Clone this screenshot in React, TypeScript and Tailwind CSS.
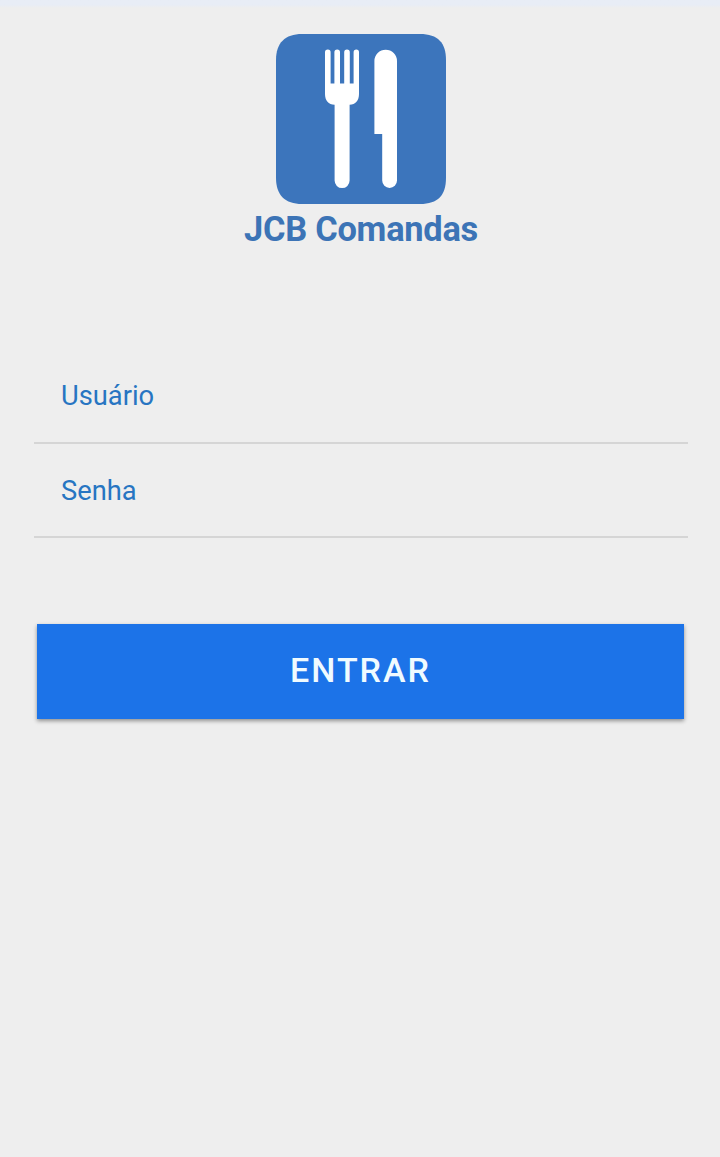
import { useState } from 'react';

interface LoginFieldProps {
  label: string;
  type: 'text' | 'password';
  value: string;
  onChange: (value: string) => void;
}

function Logo() {
  return (
    <svg viewBox="0 0 170 170" className="h-[170px] w-[170px]" aria-hidden="true">
      <path
        d="M26 0 H144 C162 0 170 9 170 26 V144 C170 161 162 170 144 170 H26 C9 170 0 161 0 144 V26 C0 9 9 0 26 0 Z"
        fill="#3c75bc"
      />
      <path
        d="M49 18.3 a2.8 2.8 0 0 1 5.6 0 V49.5 H58.4 V18.3 a2.8 2.8 0 0 1 5.6 0 V49.5 H68.2 V18.3 a2.8 2.8 0 0 1 5.6 0 V49.5 H77.6 V18.3 a2.7 2.7 0 0 1 5.4 0 V60 C83 66.5 79.5 70.5 73.6 70.8 V146.6 a7.5 7.5 0 0 1 -15 0 V70.8 C52.5 70.5 49 66.5 49 60 Z"
        fill="white"
      />
      <path
        d="M98.4 27 a11.3 11.3 0 0 1 22.6 0 V146.6 a7.4 7.4 0 0 1 -14.8 0 V100 H98.4 Z"
        fill="white"
      />
    </svg>
  );
}

function LoginField({ label, type, value, onChange }: LoginFieldProps) {
  return (
    <label className="flex h-[95px] items-center gap-4 border-b-2 border-[#d5d5d5] pt-px pl-[27px] text-[27.3px] text-[#2775c2] last:h-[94px] last:pt-[2px]">
      <span>{label}</span>
      <input
        type={type}
        value={value}
        onChange={(e) => onChange(e.target.value)}
        className="min-w-0 flex-1 bg-transparent outline-none"
      />
    </label>
  );
}

export default function App() {
  const [user, setUser] = useState('');
  const [password, setPassword] = useState('');

  return (
    <div className="flex min-h-screen flex-col bg-[#eeeeee] font-['Roboto',sans-serif]">
      <div className="h-2 bg-linear-to-b from-[#e8edf6] from-60% to-[#eeeeee]" />

      <header className="mt-[26px] flex flex-col items-center pl-[2px]">
        <Logo />
        <h1 className="mt-[5px] text-[34.4px] leading-[40px] font-bold tracking-[-0.25px] text-[#3c74b6]">JCB Comandas</h1>
      </header>

      <form className="mt-[100px] flex flex-col" onSubmit={(e) => e.preventDefault()}>
        <div className="mr-[32px] ml-[34px]">
          <LoginField label="Usuário" type="text" value={user} onChange={setUser} />
          <LoginField label="Senha" type="password" value={password} onChange={setPassword} />
        </div>
        <button
          type="submit"
          className="mt-[86px] mr-[36px] ml-[37px] h-[95px] bg-[#1c73e8] pb-[2px] text-[34px] font-medium tracking-[2px] text-[#f0fbff] shadow-[0_2px_4px_rgba(0,0,0,0.4)]"
        >
          ENTRAR
        </button>
      </form>
    </div>
  );
}
